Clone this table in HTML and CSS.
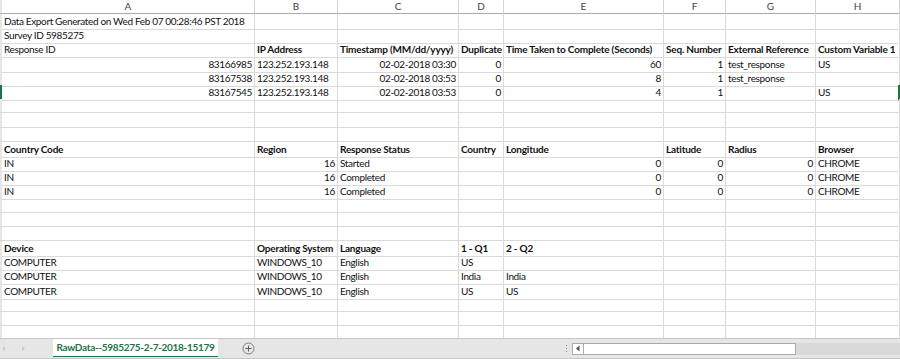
FILE: index.html
```html
<!DOCTYPE html>
<html>
<head>
<meta charset="utf-8">
<link rel="stylesheet" href="styles.css">
</head>
<body>
<div class="app">
  <div class="sheet">
    <div class="row hdr">
      <div class="strip"></div><div class="c">A</div><div class="c">B</div><div class="c">C</div><div class="c">D</div><div class="c">E</div><div class="c">F</div><div class="c">G</div><div class="c">H</div>
    </div>
    <div class="row"><div class="strip"></div><div class="c">Data Export Generated on Wed Feb 07 00:28:46 PST 2018</div><div class="c"></div><div class="c"></div><div class="c"></div><div class="c"></div><div class="c"></div><div class="c"></div><div class="c"></div></div>
    <div class="row"><div class="strip"></div><div class="c">Survey ID 5985275</div><div class="c"></div><div class="c"></div><div class="c"></div><div class="c"></div><div class="c"></div><div class="c"></div><div class="c"></div></div>
    <div class="row"><div class="strip"></div><div class="c">Response ID</div><div class="c b">IP Address</div><div class="c b">Timestamp (MM/dd/yyyy)</div><div class="c b">Duplicate</div><div class="c b">Time Taken to Complete (Seconds)</div><div class="c b">Seq. Number</div><div class="c b">External Reference</div><div class="c b">Custom Variable 1</div></div>
    <div class="row"><div class="strip"></div><div class="c r">83166985</div><div class="c">123.252.193.148</div><div class="c r">02-02-2018 03:30</div><div class="c r">0</div><div class="c r">60</div><div class="c r">1</div><div class="c">test_response</div><div class="c">US</div></div>
    <div class="row"><div class="strip"></div><div class="c r">83167538</div><div class="c">123.252.193.148</div><div class="c r">02-02-2018 03:53</div><div class="c r">0</div><div class="c r">8</div><div class="c r">1</div><div class="c">test_response</div><div class="c"></div></div>
    <div class="row sel"><div class="strip"></div><div class="c r">83167545</div><div class="c">123.252.193.148</div><div class="c r">02-02-2018 03:53</div><div class="c r">0</div><div class="c r">4</div><div class="c r">1</div><div class="c"></div><div class="c">US</div></div>
    <div class="row"><div class="strip"></div><div class="c"></div><div class="c"></div><div class="c"></div><div class="c"></div><div class="c"></div><div class="c"></div><div class="c"></div><div class="c"></div></div>
    <div class="row"><div class="strip"></div><div class="c"></div><div class="c"></div><div class="c"></div><div class="c"></div><div class="c"></div><div class="c"></div><div class="c"></div><div class="c"></div></div>
    <div class="row"><div class="strip"></div><div class="c"></div><div class="c"></div><div class="c"></div><div class="c"></div><div class="c"></div><div class="c"></div><div class="c"></div><div class="c"></div></div>
    <div class="row"><div class="strip"></div><div class="c b">Country Code</div><div class="c b">Region</div><div class="c b">Response Status</div><div class="c b">Country</div><div class="c b">Longitude</div><div class="c b">Latitude</div><div class="c b">Radius</div><div class="c b">Browser</div></div>
    <div class="row"><div class="strip"></div><div class="c">IN</div><div class="c r">16</div><div class="c">Started</div><div class="c"></div><div class="c r">0</div><div class="c r">0</div><div class="c r">0</div><div class="c">CHROME</div></div>
    <div class="row"><div class="strip"></div><div class="c">IN</div><div class="c r">16</div><div class="c">Completed</div><div class="c"></div><div class="c r">0</div><div class="c r">0</div><div class="c r">0</div><div class="c">CHROME</div></div>
    <div class="row"><div class="strip"></div><div class="c">IN</div><div class="c r">16</div><div class="c">Completed</div><div class="c"></div><div class="c r">0</div><div class="c r">0</div><div class="c r">0</div><div class="c">CHROME</div></div>
    <div class="row"><div class="strip"></div><div class="c"></div><div class="c"></div><div class="c"></div><div class="c"></div><div class="c"></div><div class="c"></div><div class="c"></div><div class="c"></div></div>
    <div class="row"><div class="strip"></div><div class="c"></div><div class="c"></div><div class="c"></div><div class="c"></div><div class="c"></div><div class="c"></div><div class="c"></div><div class="c"></div></div>
    <div class="row"><div class="strip"></div><div class="c"></div><div class="c"></div><div class="c"></div><div class="c"></div><div class="c"></div><div class="c"></div><div class="c"></div><div class="c"></div></div>
    <div class="row"><div class="strip"></div><div class="c b">Device</div><div class="c b">Operating System</div><div class="c b">Language</div><div class="c b">1 - Q1</div><div class="c b">2 - Q2</div><div class="c"></div><div class="c"></div><div class="c"></div></div>
    <div class="row"><div class="strip"></div><div class="c">COMPUTER</div><div class="c">WINDOWS_10</div><div class="c">English</div><div class="c">US</div><div class="c"></div><div class="c"></div><div class="c"></div><div class="c"></div></div>
    <div class="row"><div class="strip"></div><div class="c">COMPUTER</div><div class="c">WINDOWS_10</div><div class="c">English</div><div class="c">India</div><div class="c">India</div><div class="c"></div><div class="c"></div><div class="c"></div></div>
    <div class="row"><div class="strip"></div><div class="c">COMPUTER</div><div class="c">WINDOWS_10</div><div class="c">English</div><div class="c">US</div><div class="c">US</div><div class="c"></div><div class="c"></div><div class="c"></div></div>
    <div class="row"><div class="strip"></div><div class="c"></div><div class="c"></div><div class="c"></div><div class="c"></div><div class="c"></div><div class="c"></div><div class="c"></div><div class="c"></div></div>
    <div class="row"><div class="strip"></div><div class="c"></div><div class="c"></div><div class="c"></div><div class="c"></div><div class="c"></div><div class="c"></div><div class="c"></div><div class="c"></div></div>
    <div class="row"><div class="strip"></div><div class="c"></div><div class="c"></div><div class="c"></div><div class="c"></div><div class="c"></div><div class="c"></div><div class="c"></div><div class="c"></div></div>
  </div>
  <div class="tabbar">
    <div class="navs">
      <svg width="6" height="7" viewBox="0 0 6 7"><path d="M4 1 L1 3.5 L4 6 Z" fill="#c8c8c8"/></svg>
      <svg width="6" height="7" viewBox="0 0 6 7"><path d="M2 1 L5 3.5 L2 6 Z" fill="#c8c8c8"/></svg>
    </div>
    <div class="tab">RawData--5985275-2-7-2018-15179</div>
    <div class="add">
      <svg width="13" height="13" viewBox="0 0 13 13"><circle cx="6.5" cy="6.5" r="5.5" fill="none" stroke="#7a7a7a" stroke-width="1"/><path d="M6.5 3.5 V9.5 M3.5 6.5 H9.5" stroke="#5a5a5a" stroke-width="1"/></svg>
    </div>
    <div class="spacer"></div>
    <div class="dots"><span></span><span></span><span></span></div>
    <div class="hscroll">
      <div class="btn"><svg width="6" height="7" viewBox="0 0 6 7"><path d="M4.5 0.5 L1 3.5 L4.5 6.5 Z" fill="#505050"/></svg></div>
      <div class="thumb"></div>
      <div class="track"></div>
    </div>
  </div>
</div>
</body>
</html>
```
FILE: styles.css
```css
html, body {
  margin: 0;
  padding: 0;
  background: #ffffff;
}
body {
  width: 900px;
  height: 359px;
  overflow: hidden;
  font-family: Lato, "Liberation Sans", sans-serif;
  font-size: 10px;
  letter-spacing: -0.35px;
  color: #111111;
}
.app {
  display: flex;
  flex-direction: column;
  height: 359px;
  overflow: hidden;
}
.sheet {
  height: 338px;
  overflow: hidden;
  flex: none;
}
.row {
  display: grid;
  grid-template-columns: 2px 253px 83px 121px 45px 160px 62px 90px 84px;
  height: 14.2px;
}
.row.hdr {
  height: 14px;
}
.strip {
  background: #e6e6e6;
  border-bottom: 1px solid #d4d4d4;
}
.c {
  box-sizing: border-box;
  border-right: 1px solid #dadada;
  border-bottom: 1px solid #dadada;
  padding: 0 2px;
  white-space: nowrap;
  overflow: visible;
  line-height: 15px;
}
.hdr .c {
  text-align: center;
  color: #444;
  letter-spacing: 0;
  background: #ffffff;
  border-bottom: 1px solid #ababab;
  border-right: 1px solid #d4d4d4;
  line-height: 13px;
}
.hdr .strip {
  background: #e6e6e6;
  border-bottom: 1px solid #ababab;
}
.c.r { text-align: right; }
.c.b { font-weight: bold; letter-spacing: -0.2px; }
.row.sel .strip { background: #217346; }
.row.sel .c:last-child { border-right: 2px solid #217346; }
.tabbar {
  height: 21px;
  flex: none;
  display: flex;
  align-items: stretch;
  background: #e6e6e6;
  border-top: 1px solid #c6c6c6;
  border-bottom: 1px solid #c6c6c6;
  box-sizing: border-box;
}
.navs {
  width: 53px;
  display: flex;
  align-items: center;
  gap: 13px;
  padding-left: 1px;
  box-sizing: border-box;
}
.tab {
  width: 165px;
  background: #ffffff;
  color: #217346;
  font-weight: bold;
  letter-spacing: -0.3px;
  text-align: center;
  line-height: 17px;
  height: 18px;
  border-bottom: 1px solid #217346;
  box-sizing: border-box;
}
.add {
  width: 60px;
  display: flex;
  align-items: center;
  justify-content: center;
}
.spacer { flex: 1; }
.dots {
  width: 12px;
  display: flex;
  flex-direction: column;
  align-items: center;
  justify-content: center;
  gap: 2px;
}
.dots span {
  width: 1px;
  height: 1px;
  background: #888;
}
.hscroll {
  width: 328px;
  display: flex;
  align-items: center;
}
.hscroll .btn {
  width: 10px;
  height: 10px;
  background: #fff;
  border: 1px solid #ababab;
  display: flex;
  align-items: center;
  justify-content: center;
}
.hscroll .thumb {
  width: 211px;
  height: 10px;
  background: #fff;
  border: 1px solid #ababab;
  border-left: none;
}
.hscroll .track {
  flex: 1;
  height: 12px;
  background: #d9d9d9;
}
```
